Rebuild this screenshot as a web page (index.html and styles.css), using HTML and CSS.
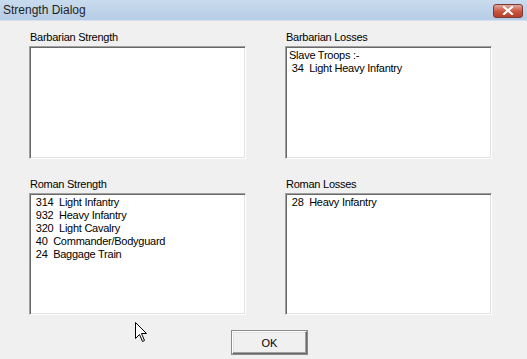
FILE: index.html
```html
<!DOCTYPE html>
<html>
<head>
    <title>Strength Dialog</title>
    <link rel="stylesheet" href="styles.css">
</head>
<body>
    <div class="titlebar">
        <span class="title">Strength Dialog</span>
        <span class="close-btn">
            <svg width="12" height="9" viewBox="0 0 12 9">
                <path d="M2 1 L10 8 M10 1 L2 8" stroke="#fff" stroke-width="2.2" stroke-linecap="square"/>
            </svg>
        </span>
    </div>

    <div class="content">
        <div class="group">
            <div class="label">Barbarian Strength</div>
            <div class="list short"></div>
        </div>
        <div class="group">
            <div class="label">Barbarian Losses</div>
            <div class="list short">Slave Troops :-
 34  Light Heavy Infantry</div>
        </div>
        <div class="group">
            <div class="label">Roman Strength</div>
            <div class="list tall"> 314  Light Infantry
 932  Heavy Infantry
 320  Light Cavalry
 40  Commander/Bodyguard
 24  Baggage Train</div>
        </div>
        <div class="group">
            <div class="label">Roman Losses</div>
            <div class="list tall"> 28  Heavy Infantry</div>
        </div>
    </div>

    <div class="footer">
        <button class="ok-btn">OK</button>
    </div>

    <!-- mouse pointer lying over the dialog -->
    <svg class="cursor" width="13" height="21" viewBox="0 0 13 21">
        <path d="M0.5 0.5 L0.5 16.5 L4.5 12.5 L7.5 19.5 L9.5 18.5 L6.5 11.5 L11.5 11.5 Z" fill="#fff" stroke="#000" stroke-width="1"/>
    </svg>
</body>
</html>
```

FILE: styles.css
```css
body { margin: 0; width: 527px; height: 359px; background: #f0f0f0; font-family: "Liberation Sans", Arial, sans-serif; font-size: 11px; letter-spacing: -0.25px; color: #000; position: relative; overflow: hidden; }
.titlebar { height: 21px; display: flex; align-items: center; padding: 0 4px 0 3px; background: linear-gradient(#c9dbee, #b6cde6); border-bottom: 1px solid #d6e2ef; box-sizing: border-box; }
.title { font-size: 12px; letter-spacing: 0; color: #1e1e1e; }
.close-btn { margin-left: auto; width: 28px; height: 12px; margin-top: 1px; display: flex; align-items: center; justify-content: center; border: 1px solid #7a3a33; border-radius: 3px; background: linear-gradient(#e4a79b, #c8533f 55%, #b8402c); }
.content { display: grid; grid-template-columns: 217px 207px; column-gap: 39px; row-gap: 19px; padding: 10px 0 0 29px; }
.label { line-height: 13px; height: 15px; padding-left: 1px; }
.list { background: #fff; box-sizing: border-box; border: 1px solid; border-color: #a0a0a0 #fff #fff #a0a0a0; box-shadow: inset 1px 1px #696969, inset -1px -1px #e3e3e3; padding: 2px 3px; line-height: 13px; white-space: pre; }
.short { height: 113px; }
.tall { height: 122px; }
.footer { padding: 16px 0 0 232px; }
.ok-btn { width: 75px; height: 23px; font-family: "Liberation Sans", Arial, sans-serif; font-size: 11px; background: #f0f0f0; border: 1px solid; border-color: #fff #696969 #696969 #fff; box-shadow: inset -1px -1px #a0a0a0, inset 1px 1px #e3e3e3, 0 0 0 1px #8a8a8a; padding: 0; }
.cursor { position: absolute; left: 135px; top: 322px; }
```
